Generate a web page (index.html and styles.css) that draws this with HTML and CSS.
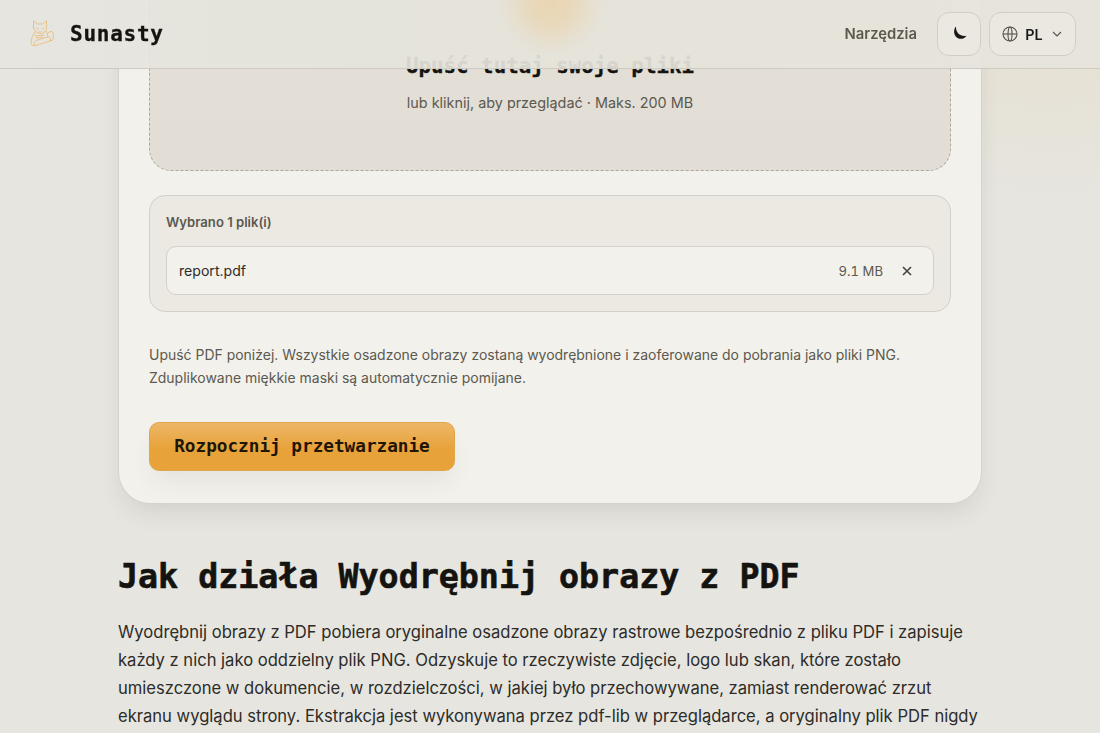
FILE: index.html
```html
<!DOCTYPE html>
<html lang="pl">
<head>
    <meta charset="utf-8" />
    <title>Sunasty</title>
    <link rel="stylesheet" href="styles.css">
</head>
<body>
    <header class="topbar">
        <a class="brand">
            <svg class="logo" width="36" height="36" viewBox="0 0 36 36">
                <g fill="none" stroke="#e9ad50" stroke-width="0.9" stroke-linejoin="round" stroke-linecap="round">
                    <path d="M9.5 12 L9.5 5 L13.5 8 L18.5 8 L22.5 5 L22.8 12 Q21.5 17 16.5 17.5 Q11 17 9.5 12Z" />
                    <path d="M12.5 12 L14.5 13 M18 13 L20 12 M15 15.5 L16.3 16.3 L17.5 15.5" />
                    <path d="M11 16 Q7.5 20 7 26 Q7.5 31 12 29.5 L26 25 Q28 22 25 20.5 L12 24.5 Q9 26 10.5 29" />
                    <path d="M22 15 Q24 18 24 21 M24 17 Q28 13.5 29 17 L29.5 22 Q29.5 25 26 25 M11 20 L20 19 M12 22 L19 21" />
                </g>
            </svg>
            <span class="brand-name">Sunasty</span>
        </a>
        <nav class="nav">
            <a class="nav-link">Narzędzia</a>
            <button class="icon-button" aria-label="Motyw">
                <svg width="16" height="16" viewBox="0 0 16 16">
                    <path d="M5 0.6 C2.5 3 2.5 8.5 5.2 11 C8.5 14 13.5 13.2 15.6 9.7 C10.5 11.2 4.5 7.5 5 0.6Z" fill="#191917" />
                </svg>
            </button>
            <button class="lang-button">
                <svg width="16" height="16" viewBox="0 0 16 16" fill="none" stroke="#55524b" stroke-width="1.1">
                    <circle cx="8" cy="8" r="7" />
                    <ellipse cx="8" cy="8" rx="2" ry="7" />
                    <path d="M1 8 H15" />
                </svg>
                <span>PL</span>
                <svg class="chevron" width="10" height="10" viewBox="0 0 10 10" fill="none" stroke="#55524b" stroke-width="1.1">
                    <path d="M1 3 L5 7 L9 3" />
                </svg>
            </button>
        </nav>
    </header>

    <main class="page">
        <section class="card">
            <div class="dropzone">
                <h3 class="drop-title">Upuść tutaj swoje pliki</h3>
                <p class="drop-hint">lub kliknij, aby przeglądać · Maks. 200 MB</p>
            </div>
            <div class="files">
                <div class="files-title">Wybrano 1 plik(i)</div>
                <div class="file">
                    <span class="file-name">report.pdf</span>
                    <span class="file-size">9.1 MB</span>
                    <button class="file-remove" aria-label="Usuń">
                        <svg width="10" height="10" viewBox="0 0 10 10" stroke="#45433d" stroke-width="1.6">
                            <path d="M1 1 L9 9 M9 1 L1 9" />
                        </svg>
                    </button>
                </div>
            </div>
            <p class="description">Upuść PDF poniżej. Wszystkie osadzone obrazy zostaną wyodrębnione i zaoferowane do pobrania jako pliki PNG.<br>Zduplikowane miękkie maski są automatycznie pomijane.</p>
            <button class="start-button">Rozpocznij przetwarzanie</button>
        </section>

        <section class="article">
            <h2>Jak działa Wyodrębnij obrazy z PDF</h2>
            <p>Wyodrębnij obrazy z PDF pobiera oryginalne osadzone obrazy rastrowe bezpośrednio z pliku PDF i zapisuje<br>każdy z nich jako oddzielny plik PNG. Odzyskuje to rzeczywiste zdjęcie, logo lub skan, które zostało<br>umieszczone w dokumencie, w rozdzielczości, w jakiej było przechowywane, zamiast renderować zrzut<br>ekranu wyglądu strony. Ekstrakcja jest wykonywana przez pdf-lib w przeglądarce, a oryginalny plik PDF nigdy</p>
        </section>
    </main>
</body>
</html>
```

FILE: styles.css
```css
* {
    box-sizing: border-box;
}
body {
    margin: 0;
    height: 733px;
    overflow: hidden;
    font-family: Inter, "Liberation Sans", sans-serif;
    color: #2d2c28;
    background: radial-gradient(ellipse 260px 160px at 1050px 50px, #e6e1d3, rgba(230, 225, 211, 0)), #e6e5e0;
}
h2, h3, p {
    margin: 0;
}
button {
    font-family: inherit;
}
.topbar {
    position: fixed;
    top: 0;
    left: 0;
    right: 0;
    z-index: 10;
    height: 69px;
    padding: 0 24px;
    display: flex;
    align-items: center;
    justify-content: space-between;
    border-bottom: 1px solid #cccac3;
    background: radial-gradient(ellipse 54px 54px at 551px 2px, #e9d5b1 0%, rgba(233, 213, 177, 0.75) 40%, rgba(233, 213, 177, 0.2) 80%, rgba(233, 213, 177, 0) 100%), linear-gradient(90deg, rgba(230, 229, 223, 0.93), rgba(229, 227, 218, 0.93) 50%, rgba(230, 228, 220, 0.93));
}
.brand {
    display: flex;
    align-items: center;
    gap: 10px;
}
.logo {
    opacity: 0.7;
}
.brand-name {
    font-family: "DejaVu Sans Mono", monospace;
    font-size: 21px;
    font-weight: bold;
    letter-spacing: 0.75px;
    color: #14130f;
    -webkit-text-stroke: 0.3px #14130f;
}
.nav {
    display: flex;
    align-items: center;
    gap: 8px;
}
.nav-link {
    margin-right: 12px;
    font-size: 14.8px;
    font-weight: 600;
    color: #5c594f;
}
.icon-button, .lang-button {
    height: 44px;
    display: flex;
    align-items: center;
    justify-content: center;
    border: 1px solid #cfcdc5;
    border-radius: 12px;
    background-color: #ebe8e1;
}
.icon-button {
    width: 44px;
    padding: 0;
}
.lang-button {
    width: 87px;
    padding: 0 1px 0 0;
    gap: 7px;
    font-size: 14.4px;
    font-weight: 600;
    color: #191917;
}
.chevron {
    margin-left: 2px;
}
.page {
    width: 864px;
    margin: 0 auto;
}
.card {
    height: 504px;
    padding: 0 30px;
    border: 1px solid #d5d3cc;
    border-top: none;
    border-radius: 0 0 32px 32px;
    background-color: #f2f1ec;
    box-shadow: 0 12px 24px -6px rgba(60, 58, 30, 0.13);
}
.dropzone {
    height: 171px;
    padding-top: 52px;
    border: 1px dashed #aaa89e;
    border-top: none;
    border-radius: 0 0 22px 22px;
    background: linear-gradient(#e3dfd6 40%, #e2ded6);
    text-align: center;
}
.drop-title {
    font-family: "DejaVu Sans Mono", monospace;
    font-size: 20.8px;
    line-height: 28px;
    color: #14130f;
    -webkit-text-stroke: 0.3px #14130f;
}
.drop-hint {
    margin-top: 12px;
    font-size: 14.4px;
    line-height: 22px;
    color: #5c594f;
}
.files {
    height: 117px;
    margin-top: 24px;
    padding: 16px;
    border: 1px solid #d2d0c8;
    border-radius: 16px;
    background-color: #ece9e2;
}
.files-title {
    font-size: 13.1px;
    font-weight: 600;
    line-height: 20px;
    color: #5c594f;
}
.file {
    height: 49px;
    margin-top: 14px;
    padding: 0 12px;
    display: flex;
    align-items: center;
    border: 1px solid #d2d0c8;
    border-radius: 10px;
    background-color: #f2f1ec;
}
.file-name {
    flex: 1;
    font-size: 14.1px;
    color: #2d2c28;
}
.file-size {
    font-size: 13.1px;
    font-variant-numeric: tabular-nums;
    color: #5c594f;
}
.file-remove {
    width: 28px;
    height: 28px;
    margin-left: 10px;
    padding: 0;
    display: flex;
    align-items: center;
    justify-content: center;
    border: none;
    background: none;
}
.description {
    margin-top: 31px;
    font-size: 13.97px;
    line-height: 23px;
    color: #5c594f;
    white-space: nowrap;
}
.start-button {
    display: block;
    width: 306px;
    height: 49px;
    margin-top: 33px;
    padding: 0 0 1px;
    border: 1px solid #dfa650;
    border-radius: 10px;
    background: linear-gradient(#edb767, #e8a23a 55%, #e8a23a);
    box-shadow: 0 14px 24px -4px rgba(60, 58, 40, 0.07);
    font-family: "DejaVu Sans Mono", monospace;
    font-size: 17.7px;
    font-weight: bold;
    color: #1f1606;
}
.article {
    padding-top: 52px;
}
.article h2 {
    font-family: "DejaVu Sans Mono", monospace;
    font-size: 33.3px;
    line-height: 42px;
    color: #14130f;
    white-space: nowrap;
    -webkit-text-stroke: 0.6px #14130f;
}
.article p {
    margin-top: 20px;
    font-size: 16.58px;
    line-height: 28px;
    white-space: nowrap;
}
```
